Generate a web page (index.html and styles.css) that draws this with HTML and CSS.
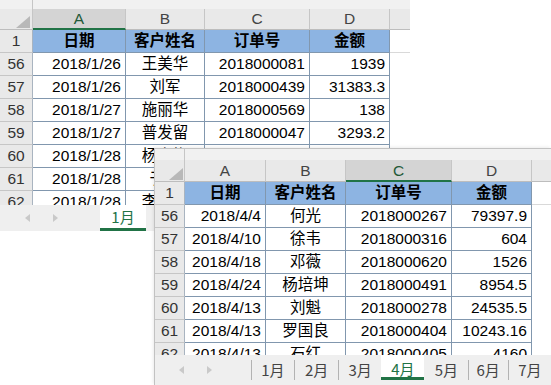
FILE: index.html
```html
<!DOCTYPE html>
<html lang="zh-CN">
<head>
  <meta charset="UTF-8" />
  <title>订单表 – 1月 / 4月</title>
  <link rel="stylesheet" href="styles.css">
</head>
<body>
  <div class="desk">

    <!-- 1月 工作表 -->
    <div class="sheet sheet-jan">
      <div class="topband"><span class="gap"></span></div>
      <div class="grid">
        <div class="row colhead">
          <div class="cell corner"><svg width="33" height="21" viewBox="0 0 33 21"><polygon points="16,19 30,19 30,7" fill="#b8b8b8"/></svg></div>
          <div class="cell sel">A</div>
          <div class="cell">B</div>
          <div class="cell">C</div>
          <div class="cell">D</div>
          <div class="cell pad"></div>
        </div>
        <div class="row title">
          <div class="cell num">1</div>
          <div class="cell">日期</div>
          <div class="cell">客户姓名</div>
          <div class="cell">订单号</div>
          <div class="cell">金额</div>
          <div class="cell pad"></div>
        </div>
        <div class="row">
          <div class="cell num">56</div>
          <div class="cell r">2018/1/26</div>
          <div class="cell c">王美华</div>
          <div class="cell r">2018000081</div>
          <div class="cell r">1939</div>
          <div class="cell pad"></div>
        </div>
        <div class="row">
          <div class="cell num">57</div>
          <div class="cell r">2018/1/26</div>
          <div class="cell c">刘军</div>
          <div class="cell r">2018000439</div>
          <div class="cell r">31383.3</div>
          <div class="cell pad"></div>
        </div>
        <div class="row">
          <div class="cell num">58</div>
          <div class="cell r">2018/1/27</div>
          <div class="cell c">施丽华</div>
          <div class="cell r">2018000569</div>
          <div class="cell r">138</div>
          <div class="cell pad"></div>
        </div>
        <div class="row">
          <div class="cell num">59</div>
          <div class="cell r">2018/1/27</div>
          <div class="cell c">普发留</div>
          <div class="cell r">2018000047</div>
          <div class="cell r">3293.2</div>
          <div class="cell pad"></div>
        </div>
        <!-- rows 60–62: C/D columns are hidden under the 4月 window -->
        <div class="row">
          <div class="cell num">60</div>
          <div class="cell r">2018/1/28</div>
          <div class="cell c">杨春梅</div>
          <div class="cell r"></div>
          <div class="cell r"></div>
          <div class="cell pad"></div>
        </div>
        <div class="row">
          <div class="cell num">61</div>
          <div class="cell r">2018/1/28</div>
          <div class="cell c">于洋</div>
          <div class="cell r"></div>
          <div class="cell r"></div>
          <div class="cell pad"></div>
        </div>
        <div class="row">
          <div class="cell num">62</div>
          <div class="cell r">2018/1/28</div>
          <div class="cell c">李晓东</div>
          <div class="cell r"></div>
          <div class="cell r"></div>
          <div class="cell pad"></div>
        </div>
      </div>
      <div class="tabs">
        <div class="nav"><span class="arrow prev"></span><span class="arrow next"></span></div>
        <div class="tab on">1月</div>
      </div>
    </div>

    <!-- 4月 工作表，叠在上面 -->
    <div class="sheet sheet-apr">
      <div class="topband"><span class="gap"></span></div>
      <div class="grid">
        <div class="row colhead">
          <div class="cell corner"><svg width="30" height="22" viewBox="0 0 30 22"><polygon points="14,20 28,20 28,8" fill="#b8b8b8"/></svg></div>
          <div class="cell">A</div>
          <div class="cell">B</div>
          <div class="cell sel">C</div>
          <div class="cell">D</div>
          <div class="cell pad"></div>
        </div>
        <div class="row title">
          <div class="cell num">1</div>
          <div class="cell">日期</div>
          <div class="cell">客户姓名</div>
          <div class="cell">订单号</div>
          <div class="cell">金额</div>
          <div class="cell pad"></div>
        </div>
        <div class="row">
          <div class="cell num">56</div>
          <div class="cell r">2018/4/4</div>
          <div class="cell c">何光</div>
          <div class="cell r">2018000267</div>
          <div class="cell r">79397.9</div>
          <div class="cell pad"></div>
        </div>
        <div class="row">
          <div class="cell num">57</div>
          <div class="cell r">2018/4/10</div>
          <div class="cell c">徐韦</div>
          <div class="cell r">2018000316</div>
          <div class="cell r">604</div>
          <div class="cell pad"></div>
        </div>
        <div class="row">
          <div class="cell num">58</div>
          <div class="cell r">2018/4/18</div>
          <div class="cell c">邓薇</div>
          <div class="cell r">2018000620</div>
          <div class="cell r">1526</div>
          <div class="cell pad"></div>
        </div>
        <div class="row">
          <div class="cell num">59</div>
          <div class="cell r">2018/4/24</div>
          <div class="cell c">杨培坤</div>
          <div class="cell r">2018000491</div>
          <div class="cell r">8954.5</div>
          <div class="cell pad"></div>
        </div>
        <div class="row">
          <div class="cell num">60</div>
          <div class="cell r">2018/4/13</div>
          <div class="cell c">刘魁</div>
          <div class="cell r">2018000278</div>
          <div class="cell r">24535.5</div>
          <div class="cell pad"></div>
        </div>
        <div class="row">
          <div class="cell num">61</div>
          <div class="cell r">2018/4/13</div>
          <div class="cell c">罗国良</div>
          <div class="cell r">2018000404</div>
          <div class="cell r">10243.16</div>
          <div class="cell pad"></div>
        </div>
        <div class="row">
          <div class="cell num">62</div>
          <div class="cell r">2018/4/13</div>
          <div class="cell c">石红</div>
          <div class="cell r">2018000405</div>
          <div class="cell r">4160</div>
          <div class="cell pad"></div>
        </div>
      </div>
      <div class="tabs">
        <div class="nav"><span class="arrow prev"></span><span class="arrow next"></span></div>
        <div class="tab">1月</div>
        <div class="tab w46">2月</div>
        <div class="tab">3月</div>
        <div class="tab on">4月</div>
        <div class="tab">5月</div>
        <div class="tab w42">6月</div>
        <div class="tab">7月</div>
      </div>
    </div>

  </div>
</body>
</html>
```

FILE: styles.css
```css
:root {
  --font-cells: 'Liberation Sans', 'Noto Sans CJK SC', Arial, sans-serif;
  --font-tabs: 'Noto Sans CJK SC', 'Liberation Sans', sans-serif;
  --head-bg: #e9e9e9;
  --head-sel: #d4d4d4;
  --head-line: #c6c6c6;
  --grid-line: #8197ae;
  --title-bg: #8db4e2;
  --excel-green: #217346;
  --tabbar-bg: #efefef;
}
* { box-sizing: border-box; }

html, body {
  margin: 0;
  padding: 0;
  background: #fff;
}
body {
  font-family: var(--font-cells);
  font-size: 15.5px;
  color: #000;
}

.desk {
  position: relative;
  width: 551px;
  height: 385px;
  overflow: hidden;
}

.sheet { background: #fff; }
.sheet-jan { width: 410px; }
/* second window lies over the first one */
.sheet-apr {
  position: absolute;
  left: 154px; top: 148px;
  width: 397px; height: 237px;
  border-top: 1px solid #c2c2c2;
  border-left: 1px solid #c2c2c2;
  box-shadow: -1px -1px 3px rgba(0,0,0,0.08);
}

/* strip above the column letters */
.topband { display: flex; background: #f1f1f1; }
.topband .gap { border-right: 1px solid var(--head-line); }
.sheet-jan .topband { height: 9px; }
.sheet-jan .topband .gap { width: 33px; }
.sheet-apr .topband { height: 11px; }
.sheet-apr .topband .gap { width: 30px; }

.grid { overflow: hidden; }
.sheet-jan .grid { height: 196px; }
.sheet-apr .grid { height: 195px; }

.row { display: grid; height: 23px; }
.sheet-jan .row { grid-template-columns: 33px 93px 79px 105px 80px 1fr; }
.sheet-apr .row { grid-template-columns: 30px 81px 80px 106px 80px 1fr; }

.cell {
  padding: 0 4px;
  line-height: 22px;
  white-space: nowrap;
  overflow: hidden;
  border-right: 1px solid var(--grid-line);
  border-bottom: 1px solid var(--grid-line);
}
.r { text-align: right; }
.c { text-align: center; }

.cell.num {
  padding: 0;
  text-align: center;
  color: #333;
  background: var(--head-bg);
  border-right-color: #a9b4c0;
  border-bottom-color: var(--head-line);
}
.cell.pad { border: none; }

/* column letters */
.colhead .cell {
  padding: 0;
  text-align: center;
  color: #444;
  background: var(--head-bg);
  border-right-color: var(--head-line);
  border-bottom-color: #bdbdbd;
}
.sheet-jan .colhead { height: 21px; }
.sheet-jan .colhead .cell { line-height: 20px; }
.sheet-apr .colhead { height: 22px; }
.colhead .cell.sel {
  background: var(--head-sel);
  color: #1f5a38;
  border-bottom: 2px solid var(--excel-green);
}
.colhead .cell.pad { border-bottom: 1px solid #bdbdbd; }
.colhead .corner svg { display: block; }

/* blue title row */
.title .cell {
  font-weight: bold;
  text-align: center;
  background: var(--title-bg);
}
.title .cell.num { font-weight: normal; background: var(--head-bg); }
.title .cell.pad { background: #fff; border-bottom: 1px solid #d9d9d9; }

/* sheet tabs */
.tabs {
  display: flex;
  align-items: center;
  background: var(--tabbar-bg);
  font-family: var(--font-tabs);
  font-size: 15px;
  color: #444;
}
.sheet-jan .tabs { height: 26px; }
.sheet-apr .tabs { height: 30px; }

.nav {
  display: flex;
  align-items: center;
  gap: 23px;
  width: 100px;
  padding-left: 25px;
  align-self: stretch;
}
.sheet-apr .nav { width: 99px; padding-left: 24px; }
.arrow {
  width: 0; height: 0;
  border-top: 4px solid transparent;
  border-bottom: 4px solid transparent;
}
.arrow.prev { border-right: 5px solid #c9c9c9; }
.arrow.next { border-left: 5px solid #c9c9c9; }

.tab {
  width: 45px;
  height: 20px;
  line-height: 20px;
  text-align: center;
  border-left: 1px solid #b3b3b3;
}
.tab.w46 { width: 46px; }
.tab.w42 { width: 42px; }
.tab.on {
  align-self: stretch;
  height: auto;
  line-height: 21px;
  padding-top: 1px;
  background: #fff;
  color: var(--excel-green);
  border-left: none;
  border-bottom: 3px solid var(--excel-green);
}
.sheet-jan .tab.on { width: 46px; }
.sheet-apr .tab.on { margin-bottom: 5px; padding-top: 3px; }
.tab.on + .tab { border-left-color: transparent; }
```
